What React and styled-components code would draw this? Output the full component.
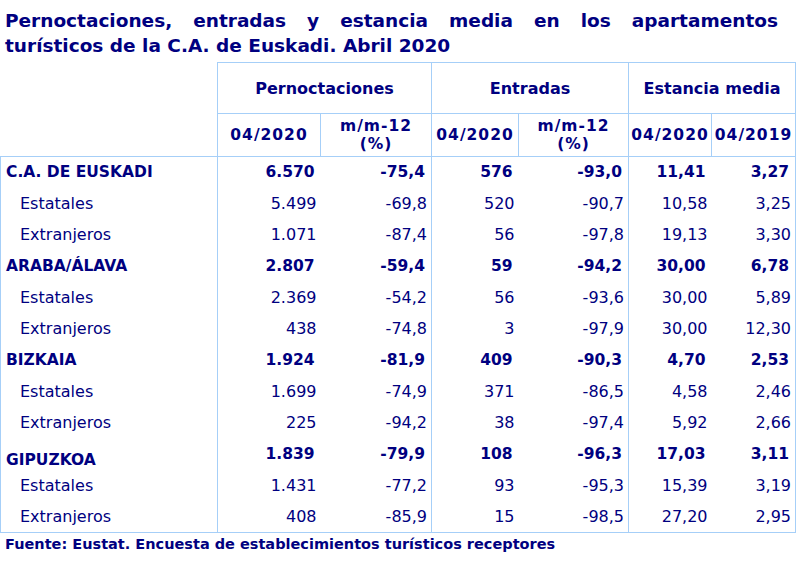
import React from "react";
import styled, { createGlobalStyle } from "styled-components";

const GlobalStyle = createGlobalStyle`
  html, body {
    margin: 0;
    padding: 0;
    background: #ffffff;
  }
  body {
    font-family: "DejaVu Sans", Verdana, sans-serif;
    color: #000080;
  }
`;

const rows = [
  { label: "C.A. DE EUSKADI", bold: true, v: ["6.570", "-75,4", "576", "-93,0", "11,41", "3,27"] },
  { label: "Estatales", v: ["5.499", "-69,8", "520", "-90,7", "10,58", "3,25"] },
  { label: "Extranjeros", v: ["1.071", "-87,4", "56", "-97,8", "19,13", "3,30"] },
  { label: "ARABA/ÁLAVA", bold: true, v: ["2.807", "-59,4", "59", "-94,2", "30,00", "6,78"] },
  { label: "Estatales", v: ["2.369", "-54,2", "56", "-93,6", "30,00", "5,89"] },
  { label: "Extranjeros", v: ["438", "-74,8", "3", "-97,9", "30,00", "12,30"] },
  { label: "BIZKAIA", bold: true, v: ["1.924", "-81,9", "409", "-90,3", "4,70", "2,53"] },
  { label: "Estatales", v: ["1.699", "-74,9", "371", "-86,5", "4,58", "2,46"] },
  { label: "Extranjeros", v: ["225", "-94,2", "38", "-97,4", "5,92", "2,66"] },
  { label: "GIPUZKOA", bold: true, low: true, v: ["1.839", "-79,9", "108", "-96,3", "17,03", "3,11"] },
  { label: "Estatales", v: ["1.431", "-77,2", "93", "-95,3", "15,39", "3,19"] },
  { label: "Extranjeros", v: ["408", "-85,9", "15", "-98,5", "27,20", "2,95"] },
];

const colWidths = [217, 103, 111, 87, 110, 83, 84];
const groupEnd = [1, 3, 5];
const line = "1px solid #a6cff8";

const Page = styled.div`
  width: 800px;
  height: 571px;
  overflow: hidden;
`;

const Title = styled.h1`
  margin: 0;
  padding: 8px 22px 0 5px;
  font-size: 18.5px;
  line-height: 25px;
  font-weight: bold;
  text-align: justify;
  text-align-last: left;
`;

const Table = styled.table`
  margin-top: 4px;
  border-collapse: collapse;
  table-layout: fixed;
  width: 796px;
`;

const Blank = styled.th`
  border: none;
  border-bottom: ${line};
`;

const GroupHead = styled.th`
  height: 49px;
  border: ${line};
  font-size: 16px;
  font-weight: bold;
  text-align: center;
  padding: 1px 0 0;
`;

const SubHead = styled.th`
  height: 42px;
  border: ${line};
  font-size: 15.5px;
  font-weight: bold;
  text-align: center;
  line-height: 18px;
  padding: 0;
  letter-spacing: 1px;
`;

const Row = styled.tr`
  height: 31.33px;
`;

const Label = styled.td`
  border-left: ${line};
  border-right: ${line};
  border-bottom: ${(p) => (p.$last ? line : "none")};
  padding: 0 0 ${(p) => (p.$low ? "1px" : "0")} ${(p) => (p.$bold ? "5px" : "19px")};
  font-size: ${(p) => (p.$bold ? "15.5px" : "16px")};
  font-weight: ${(p) => (p.$bold ? "bold" : "normal")};
  white-space: nowrap;
  vertical-align: ${(p) => (p.$low ? "bottom" : "middle")};
`;

const Num = styled.td`
  padding: 0 ${(p) => (p.$bold ? "6px" : "4px")} 0 0;
  font-size: ${(p) => (p.$bold ? "15.5px" : "16px")};
  font-weight: ${(p) => (p.$bold ? "bold" : "normal")};
  text-align: right;
  white-space: nowrap;
  border-right: ${(p) => (p.$end ? line : "none")};
  border-bottom: ${(p) => (p.$last ? line : "none")};
`;

const Source = styled.p`
  margin: 3px 0 0 5px;
  font-size: 14.5px;
  font-weight: bold;
`;

export default function App() {
  return (
    <>
      <GlobalStyle />
      <Page>
        <Title>
          Pernoctaciones, entradas y estancia media en los apartamentos
          turísticos de la C.A. de Euskadi. Abril 2020
        </Title>
        <Table>
          <colgroup>
            {colWidths.map((w, i) => (
              <col key={i} style={{ width: w }} />
            ))}
          </colgroup>
          <thead>
            <tr>
              <Blank rowSpan={2} />
              <GroupHead colSpan={2}>Pernoctaciones</GroupHead>
              <GroupHead colSpan={2}>Entradas</GroupHead>
              <GroupHead colSpan={2}>Estancia media</GroupHead>
            </tr>
            <tr>
              <SubHead>04/2020</SubHead>
              <SubHead>
                m/m-12
                <br />
                (%)
              </SubHead>
              <SubHead>04/2020</SubHead>
              <SubHead>
                m/m-12
                <br />
                (%)
              </SubHead>
              <SubHead>04/2020</SubHead>
              <SubHead>04/2019</SubHead>
            </tr>
          </thead>
          <tbody>
            {rows.map((r, i) => {
              const last = i === rows.length - 1;
              return (
                <Row key={i}>
                  <Label $bold={r.bold} $low={r.low} $last={last}>
                    {r.label}
                  </Label>
                  {r.v.map((x, j) => (
                    <Num key={j} $bold={r.bold} $end={groupEnd.includes(j)} $last={last}>
                      {x}
                    </Num>
                  ))}
                </Row>
              );
            })}
          </tbody>
        </Table>
        <Source>Fuente: Eustat. Encuesta de establecimientos turísticos receptores</Source>
      </Page>
    </>
  );
}
